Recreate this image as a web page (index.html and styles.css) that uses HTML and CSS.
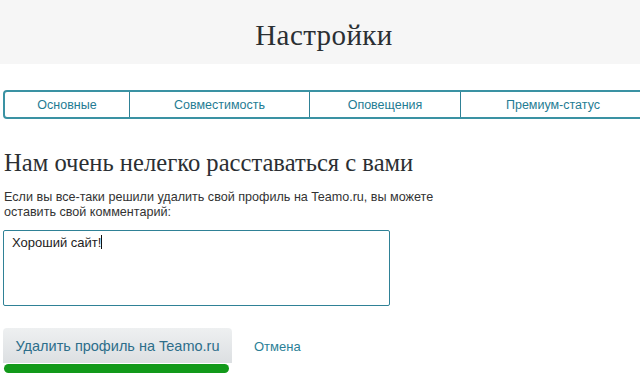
FILE: index.html
```html
<!DOCTYPE html>
<html lang="ru">
<head>
<meta charset="utf-8">
<title>Настройки</title>
<link rel="stylesheet" href="styles.css">
</head>
<body>
<header class="top">
  <h1 class="title">Настройки</h1>
</header>
<nav class="tabs">
  <a class="tab tab-1">Основные</a>
  <a class="tab tab-2">Совместимость</a>
  <a class="tab tab-3">Оповещения</a>
  <a class="tab tab-4">Премиум-статус</a>
</nav>
<main class="content">
  <h2 class="heading">Нам очень нелегко расставаться с вами</h2>
  <p class="lead">Если вы все-таки решили удалить свой профиль на Teamo.ru, вы можете оставить свой комментарий:</p>
  <div class="comment">Хороший сайт!<span class="caret"></span></div>
  <div class="actions">
    <div class="btn-wrap">
      <button class="btn">Удалить профиль на Teamo.ru</button>
      <div class="underline"></div>
    </div>
    <a class="cancel">Отмена</a>
  </div>
</main>
</body>
</html>
```
FILE: styles.css
```css
html, body {
  margin: 0;
  padding: 0;
  background: #fff;
  overflow: hidden;
}
body {
  width: 640px;
  height: 380px;
  font-family: "Liberation Sans", Arial, sans-serif;
  color: #333;
}
.top {
  background: #f6f6f6;
  height: 64px;
  display: flex;
  align-items: center;
  justify-content: center;
}
.title {
  margin: 0;
  padding: 6px 0 0 8px;
  font-family: "Liberation Serif", "DejaVu Serif", serif;
  font-weight: normal;
  font-size: 29px;
  color: #2b2f33;
  letter-spacing: 0.4px;
}
.tabs {
  display: flex;
  margin: 26px 0 0 3px;
  width: 645px;
  height: 25px;
  border: 2px solid #3a92a3;
  border-radius: 4px;
}
.tab {
  display: flex;
  align-items: center;
  justify-content: center;
  font-size: 12.5px;
  color: #1f7c93;
  border-right: 1px solid #2f8196;
  flex: none;
}
.tab-1 { width: 124px; }
.tab-2 { width: 179px; }
.tab-3 { width: 150px; }
.tab-4 { width: 184px; border-right: none; }
.content {
  padding: 0 4px;
}
.heading {
  margin: 30px 0 0 0;
  font-family: "Liberation Serif", "DejaVu Serif", serif;
  font-weight: normal;
  font-size: 24.6px;
  color: #2b2f33;
  line-height: 28px;
}
.lead {
  margin: 13px 0 0 0;
  font-size: 12.6px;
  line-height: 15px;
  width: 440px;
  color: #333;
}
.comment {
  margin: 10px 0 0 -1px;
  width: 369px;
  height: 66px;
  border: 1.5px solid #2f8196;
  border-radius: 2px;
  padding: 4px 8px;
  font-size: 13px;
  line-height: 16px;
  color: #222;
}
.caret {
  display: inline-block;
  width: 1px;
  height: 14px;
  background: #111;
  vertical-align: -2px;
}
.actions {
  display: flex;
  align-items: flex-start;
  margin: 22px 0 0 -1px;
}
.btn-wrap {
  display: flex;
  flex-direction: column;
  width: 229px;
}
.btn {
  height: 35px;
  width: 229px;
  border: none;
  border-radius: 4px 4px 0 0;
  background: linear-gradient(#eef0f1, #dcdfe2);
  font-family: "Liberation Sans", Arial, sans-serif;
  font-size: 14.5px;
  color: #2d6e8a;
  padding: 0;
}
.underline {
  margin: 1px 0 0 1px;
  width: 225px;
  height: 9px;
  border-radius: 5px;
  background: #12991a;
}
.cancel {
  margin: 11px 0 0 22px;
  font-size: 13px;
  color: #2b7f97;
}
```
